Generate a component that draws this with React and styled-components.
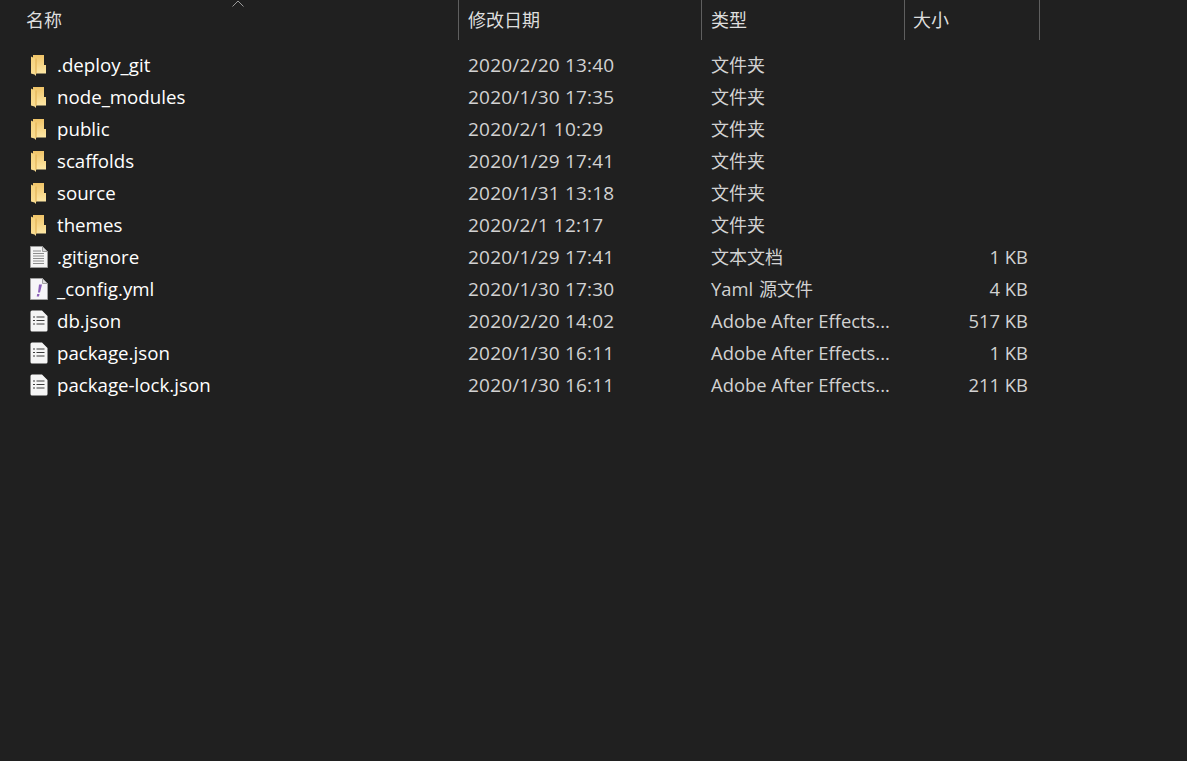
import React from "react"
import styled, { createGlobalStyle } from "styled-components"

const GlobalStyle = createGlobalStyle`
  html, body {
    margin: 0;
    padding: 0;
    background: #202020;
  }
`

const COLUMNS = "459px 243px 203px 135px"

const Page = styled.div`
  position: relative;
  width: 1187px;
  height: 761px;
  overflow: hidden;
  background: #202020;
  font-family: "Open Sans", "Noto Sans CJK SC", sans-serif;
  font-size: 18.7px;
`

const Header = styled.div`
  display: grid;
  grid-template-columns: ${COLUMNS};
  height: 40px;
  margin-bottom: 9px;
`

const HeaderCell = styled.div`
  box-sizing: border-box;
  height: 40px;
  line-height: 39px;
  padding-left: ${props => props.$indent}px;
  border-right: 1px solid #5f5f5f;
  color: #dedede;
  font-family: "Noto Sans CJK SC", sans-serif;
  font-size: 18px;
`

const SortCaret = styled.svg`
  position: absolute;
  left: 231px;
  top: 0;
  width: 14px;
  height: 8px;
`

const Row = styled.div`
  display: grid;
  grid-template-columns: ${COLUMNS};
  grid-template-rows: 32px;
  height: 32px;
  line-height: 32px;
  white-space: nowrap;
`

const NameCell = styled.div`
  display: flex;
  align-items: center;
  padding-left: 30px;
  color: #ffffff;
`

const IconSlot = styled.div`
  display: flex;
  width: 27px;
  flex: none;
`

const DateCell = styled.div`
  padding-left: 9px;
  color: #d2d2d2;
  font-size: 19px;
  letter-spacing: 0.2px;
`

const TypeCell = styled.div`
  padding-left: 9px;
  color: #d2d2d2;
  font-size: 18.4px;
`

const SizeCell = styled.div`
  padding-right: 12px;
  text-align: right;
  color: #d2d2d2;
  font-size: 18.4px;
`

const Cjk = styled.span`
  margin-left: ${props => props.$gap || 0}px;
  font-family: "Noto Sans CJK SC", sans-serif;
  font-size: 18px;
  line-height: 1;
`

function FolderIcon() {
  return (
    <svg width="18" height="22" viewBox="0 0 18 22">
      <defs>
        <linearGradient id="folderBack" x1="0" y1="0" x2="0" y2="1">
          <stop offset="0" stopColor="#f0c468" />
          <stop offset="1" stopColor="#fde7a6" />
        </linearGradient>
        <linearGradient id="folderFront" x1="0" y1="0" x2="0" y2="1">
          <stop offset="0" stopColor="#f5d27e" />
          <stop offset="1" stopColor="#fbdf94" />
        </linearGradient>
      </defs>
      <path d="M3 1h11v10h2v8.500H3z" fill="url(#folderBack)" />
      <path d="M1 2.500 6 5v17l-1.500-1.500L1 19.500z" fill="url(#folderFront)" />
      <path d="M5.500 4.500h1v15h-1z" fill="#dfae4e" />
    </svg>
  )
}

function TextIcon() {
  return (
    <svg width="18" height="22" viewBox="0 0 18 22">
      <path d="M.5.500h12l5 5v16H.5z" fill="#f4f4f4" stroke="#9a9a9a" />
      <path d="M12.500.500v5h5z" fill="#d8d8d8" stroke="#9a9a9a" />
      <path
        d="M3 5h8M3 7.500h11M3 10h11M3 12.500h11M3 15h11M3 17.500h11"
        stroke="#8c8c8c"
        strokeWidth="1"
      />
    </svg>
  )
}

function YamlIcon() {
  return (
    <svg width="18" height="22" viewBox="0 0 18 22">
      <path d="M.5.500h12l5 5v16H.5z" fill="#f6f5f8" stroke="#a0a0a0" />
      <path d="M12.500.500v5h5z" fill="#dcdcdc" stroke="#a0a0a0" />
      <path d="M9 6.500h3l-2 8H8zM7.200 16h2.300l-.5 2.500H6.700z" fill="#8a5fb8" />
    </svg>
  )
}

function JsonIcon() {
  return (
    <svg width="18" height="22" viewBox="0 0 18 22">
      <path d="M2 .500h10l5.500 5.500v14a1.500 1.500 0 0 1-1.500 1.500H2A1.500 1.500 0 0 1 .5 20V2A1.500 1.500 0 0 1 2 .500z" fill="#f5f5f5" />
      <path
        d="M3 7h2M6.500 7h8M3 10.500h2M6.500 10.500h8M3 14h2M6.500 14h8"
        stroke="#3c3c3c"
        strokeWidth="1.200"
      />
    </svg>
  )
}

const AE = "Adobe After Effects..."

const files = [
  { name: ".deploy_git", date: "2020/2/20 13:40", type: "文件夹", icon: FolderIcon },
  { name: "node_modules", date: "2020/1/30 17:35", type: "文件夹", icon: FolderIcon },
  { name: "public", date: "2020/2/1 10:29", type: "文件夹", icon: FolderIcon },
  { name: "scaffolds", date: "2020/1/29 17:41", type: "文件夹", icon: FolderIcon },
  { name: "source", date: "2020/1/31 13:18", type: "文件夹", icon: FolderIcon },
  { name: "themes", date: "2020/2/1 12:17", type: "文件夹", icon: FolderIcon },
  { name: ".gitignore", date: "2020/1/29 17:41", type: "文本文档", size: "1 KB", icon: TextIcon },
  { name: "_config.yml", date: "2020/1/30 17:30", type: "Yaml 源文件", size: "4 KB", icon: YamlIcon },
  { name: "db.json", date: "2020/2/20 14:02", type: AE, size: "517 KB", icon: JsonIcon },
  { name: "package.json", date: "2020/1/30 16:11", type: AE, size: "1 KB", icon: JsonIcon },
  { name: "package-lock.json", date: "2020/1/30 16:11", type: AE, size: "211 KB", icon: JsonIcon }
]

function TypeText({ value }) {
  if (value === AE) return value
  if (value.startsWith("Yaml")) {
    return (
      <>
        Yaml <Cjk $gap={1}>源文件</Cjk>
      </>
    )
  }
  return <Cjk>{value}</Cjk>
}

export default function App() {
  return (
    <Page>
      <GlobalStyle />
      <Header>
        <HeaderCell $indent={26}>名称</HeaderCell>
        <HeaderCell $indent={9}>修改日期</HeaderCell>
        <HeaderCell $indent={9}>类型</HeaderCell>
        <HeaderCell $indent={8}>大小</HeaderCell>
      </Header>
      <SortCaret viewBox="0 0 14 8">
        <path d="M1.500 6.500 7 1l5.500 5.500" fill="none" stroke="#9a9a9a" strokeWidth="1" />
      </SortCaret>
      {files.map(file => {
        const Icon = file.icon
        return (
          <Row key={file.name}>
            <NameCell>
              <IconSlot>
                <Icon />
              </IconSlot>
              {file.name}
            </NameCell>
            <DateCell>{file.date}</DateCell>
            <TypeCell>
              <TypeText value={file.type} />
            </TypeCell>
            <SizeCell>{file.size}</SizeCell>
          </Row>
        )
      })}
    </Page>
  )
}
